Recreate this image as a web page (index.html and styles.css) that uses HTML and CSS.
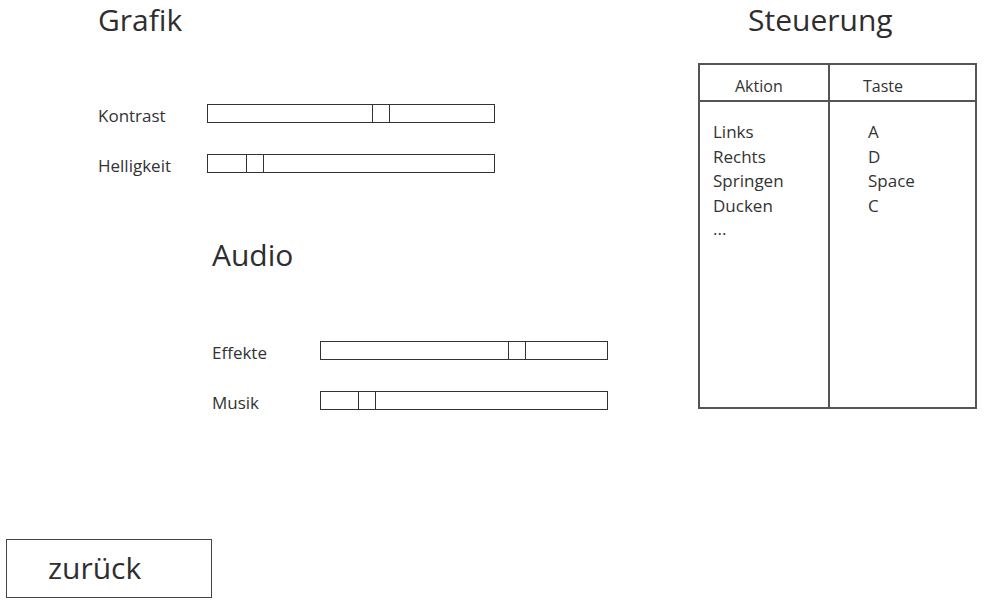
FILE: index.html
```html
<!DOCTYPE html>
<html lang="de">
<head>
<meta charset="utf-8">
<title>Einstellungen</title>
<link rel="stylesheet" href="styles.css">
</head>
<body>
<div class="page">
  <div class="top">
    <section class="settings">
      <h1 class="title">Grafik</h1>
      <div class="rows">
        <div class="row"><span class="label">Kontrast</span><div class="slider"><div class="thumb" style="left:164px"></div></div></div>
        <div class="row"><span class="label">Helligkeit</span><div class="slider"><div class="thumb" style="left:38px"></div></div></div>
      </div>
      <section class="audio">
        <h1 class="title">Audio</h1>
        <div class="rows">
          <div class="row"><span class="label">Effekte</span><div class="slider"><div class="thumb" style="left:187px"></div></div></div>
          <div class="row"><span class="label">Musik</span><div class="slider"><div class="thumb" style="left:37px"></div></div></div>
        </div>
      </section>
    </section>
    <section class="controls">
      <h1 class="title ctrl-title">Steuerung</h1>
      <div class="keys">
        <div class="head head-action">Aktion</div>
        <div class="head head-key">Taste</div>
        <div class="body body-action">
          <div>Links</div>
          <div>Rechts</div>
          <div>Springen</div>
          <div>Ducken</div>
          <div class="dots">...</div>
        </div>
        <div class="body body-key">
          <div>A</div>
          <div>D</div>
          <div>Space</div>
          <div>C</div>
        </div>
      </div>
    </section>
  </div>
  <button class="back">zurück</button>
</div>
</body>
</html>
```
FILE: styles.css
```css
* { box-sizing: border-box; }
html, body { margin: 0; padding: 0; background: #fff; }
body {
  font-family: "Open Sans", "Liberation Sans", sans-serif;
  color: #333;
}
.page {
  width: 987px;
  height: 605px;
  display: flex;
  flex-direction: column;
}
.top {
  display: flex;
  align-items: flex-start;
}
.title {
  margin: 0;
  font-weight: 400;
  font-size: 30px;
  line-height: 40px;
  color: #2e2e2e;
}
.settings {
  padding-left: 98px;
}
.rows {
  margin-top: 64px;
  display: flex;
  flex-direction: column;
  gap: 31px;
}
.row {
  display: flex;
  align-items: center;
  height: 19px;
}
.label {
  flex: 0 0 109px;
  font-size: 17px;
  line-height: 19px;
  padding-top: 3px;
}
.slider {
  position: relative;
  width: 288px;
  height: 19px;
  border: 1px solid #333;
}
.thumb {
  position: absolute;
  top: -1px;
  bottom: -1px;
  width: 18px;
  border: 1px solid #333;
}
.audio {
  margin-top: 62px;
  padding-left: 114px;
}
.audio .rows { margin-top: 66px; }
.audio .label { flex-basis: 108px; }
.controls {
  margin-left: auto;
  margin-right: 10px;
  width: 279px;
}
.ctrl-title { padding-left: 50px; }
.keys {
  margin-top: 23px;
  height: 346px;
  border: 2px solid #555;
  display: grid;
  grid-template-columns: 130px 1fr;
  grid-template-rows: 37px 1fr;
}
.head {
  border-bottom: 2px solid #555;
  font-size: 16px;
  line-height: 37px;
  padding-top: 3px;
}
.head-action { border-right: 2px solid #555; padding-left: 35px; }
.head-key { padding-left: 33px; }
.body {
  padding-top: 18px;
  font-size: 17px;
  line-height: 24.5px;
}
.body-action { border-right: 2px solid #555; padding-left: 13px; }
.body-key { padding-left: 38px; }
.dots { line-height: 22px; }
.back {
  margin: auto 0 7px 6px;
  width: 206px;
  height: 59px;
  background: #fff;
  border: 1px solid #444;
  font-family: "Open Sans", "Liberation Sans", sans-serif;
  font-size: 30px;
  color: #2e2e2e;
  text-align: left;
  padding: 0 0 2px 41px;
}
```
